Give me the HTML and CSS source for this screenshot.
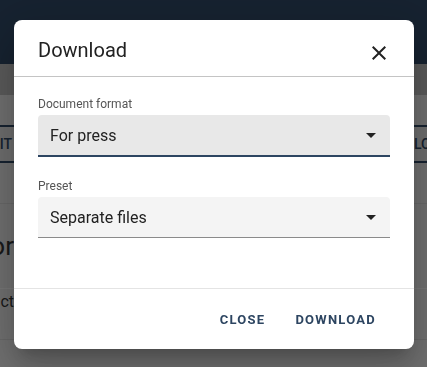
FILE: index.html
```html
<!DOCTYPE html>
<html lang="en">
  <head>
    <meta charset="UTF-8" />
    <meta name="viewport" content="width=device-width, initial-scale=1.0" />
    <title>Download</title>
    <link rel="stylesheet" href="styles.css">
  </head>
  <body>
    <div class="app">
      <header class="app-bar">
        <h1 class="app-title">Student pamphlet preview</h1>
      </header>
      <div class="toolbar"></div>
      <div class="tabs">
        <span class="tab-slot tab-left"><span class="tab">EDIT</span></span>
        <span class="tab-slot tab-right"><span class="tab">LOAD</span></span>
      </div>
      <div class="section">
        <span class="clip-left"><span class="section-title">Editor</span></span>
      </div>
      <div class="row">
        <span class="clip-left"><span class="row-text">Product</span></span>
      </div>
    </div>

    <div class="backdrop">
      <div class="dialog">
        <div class="dialog-head">
          <h2 class="dialog-title">Download</h2>
          <button class="icon-btn" aria-label="Close">
            <svg width="24" height="24" viewBox="0 0 24 24">
              <path d="M19 6.41 17.59 5 12 10.59 6.41 5 5 6.41 10.59 12 5 17.59 6.41 19 12 13.41 17.59 19 19 17.59 13.41 12z" fill="#222"/>
            </svg>
          </button>
        </div>
        <div class="dialog-body">
          <label class="field">
            <span class="field-label">Document format</span>
            <span class="select select-focus">
              <span class="select-value">For press</span>
              <span class="caret"></span>
            </span>
          </label>
          <label class="field">
            <span class="field-label">Preset</span>
            <span class="select">
              <span class="select-value">Separate files</span>
              <span class="caret"></span>
            </span>
          </label>
        </div>
        <div class="dialog-actions">
          <button class="text-btn">Close</button>
          <button class="text-btn">Download</button>
        </div>
      </div>
    </div>
  </body>
</html>
```

FILE: styles.css
```css
body {
  margin: 0;
  padding: 0;
  font-family: Roboto, "Liberation Sans", sans-serif;
  background: #e0e0e0;
  height: 367px;
  overflow: hidden;
}

.app {
  height: 100%;
  display: flex;
  flex-direction: column;
}

.app-bar {
  height: 64px;
  background: #2d4561;
  display: flex;
  justify-content: center;
  padding-top: 16px;
  box-sizing: border-box;
}

.app-title {
  margin: 0;
  color: white;
  font-size: 20px;
  font-weight: 500;
}

.toolbar {
  height: 31px;
  background: #b5b5b5;
}

.tabs {
  margin-top: 30px;
  height: 34px;
  border-top: 2px solid #2d4561;
  border-bottom: 2px solid #2d4561;
  display: flex;
  justify-content: space-between;
  align-items: center;
  background: #dcdcdc;
}

.tab-slot {
  display: flex;
  width: 12px;
}

.tab-left {
  justify-content: flex-end;
}

.tab-right {
  width: 13px;
}

.tab {
  font-size: 14px;
  font-weight: 500;
  color: #2d4561;
  white-space: nowrap;
}

.clip-left {
  display: flex;
  justify-content: flex-end;
  width: 14px;
}

.section {
  margin-top: 40px;
  border-top: 1px solid #d0d0d0;
  height: 84px;
  display: flex;
  align-items: center;
}

.section-title {
  font-size: 26px;
  color: #333;
  white-space: nowrap;
}

.row {
  height: 50px;
  border-top: 1px solid #eee;
  border-bottom: 1px solid #cfcfcf;
  display: flex;
  align-items: flex-start;
}

.row-text {
  margin-top: 3px;
  font-size: 16px;
  color: #333;
  white-space: nowrap;
}

.backdrop {
  position: fixed;
  inset: 0;
  background: rgba(0, 0, 0, 0.5);
  display: flex;
  justify-content: center;
  align-items: center;
  padding-top: 2px;
}

.dialog {
  width: 400px;
  height: 329px;
  background: white;
  border-radius: 8px;
  box-shadow: 0 11px 15px -7px rgba(0, 0, 0, 0.2),
    0 24px 38px 3px rgba(0, 0, 0, 0.14), 0 9px 46px 8px rgba(0, 0, 0, 0.12);
  display: flex;
  flex-direction: column;
  margin-left: 1px;
}

.dialog-head {
  height: 56px;
  display: flex;
  align-items: center;
  justify-content: space-between;
  padding: 0 24px;
  border-bottom: 1px solid #c4c4c4;
}

.dialog-title {
  margin: 4px 0 0;
  font-size: 20px;
  font-weight: 400;
  color: #222;
}

.icon-btn {
  border: none;
  background: none;
  padding: 0;
  margin: 10px -1px 0 0;
  display: flex;
  cursor: pointer;
}

.dialog-body {
  flex: 1;
  padding: 20px 24px 0;
  display: flex;
  flex-direction: column;
  gap: 22px;
}

.field {
  display: flex;
  flex-direction: column;
}

.field-label {
  font-size: 12px;
  color: #555;
  line-height: 14px;
  margin-bottom: 4px;
}

.select {
  height: 40px;
  background: #f4f4f4;
  border-radius: 4px 4px 0 0;
  border-bottom: 1px solid #8a8a8a;
  display: flex;
  align-items: center;
  justify-content: space-between;
  padding: 0 14px 0 12px;
}

.select-focus {
  background: #e8e8e8;
  border-bottom: 2px solid #2d4561;
}

.select-value {
  font-size: 16px;
  color: #222;
}

.caret {
  width: 0;
  height: 0;
  border-left: 5px solid transparent;
  border-right: 5px solid transparent;
  border-top: 5px solid #222;
  margin-top: 1px;
}

.dialog-actions {
  height: 60px;
  border-top: 1px solid #e4e4e4;
  display: flex;
  justify-content: flex-end;
  align-items: center;
  gap: 14px;
  padding: 0 30px 0 0;
}

.text-btn {
  border: none;
  background: none;
  font-family: inherit;
  font-size: 13px;
  font-weight: 700;
  letter-spacing: 1.25px;
  text-transform: uppercase;
  color: #2d4561;
  padding: 8px 8px;
  cursor: pointer;
}
```
